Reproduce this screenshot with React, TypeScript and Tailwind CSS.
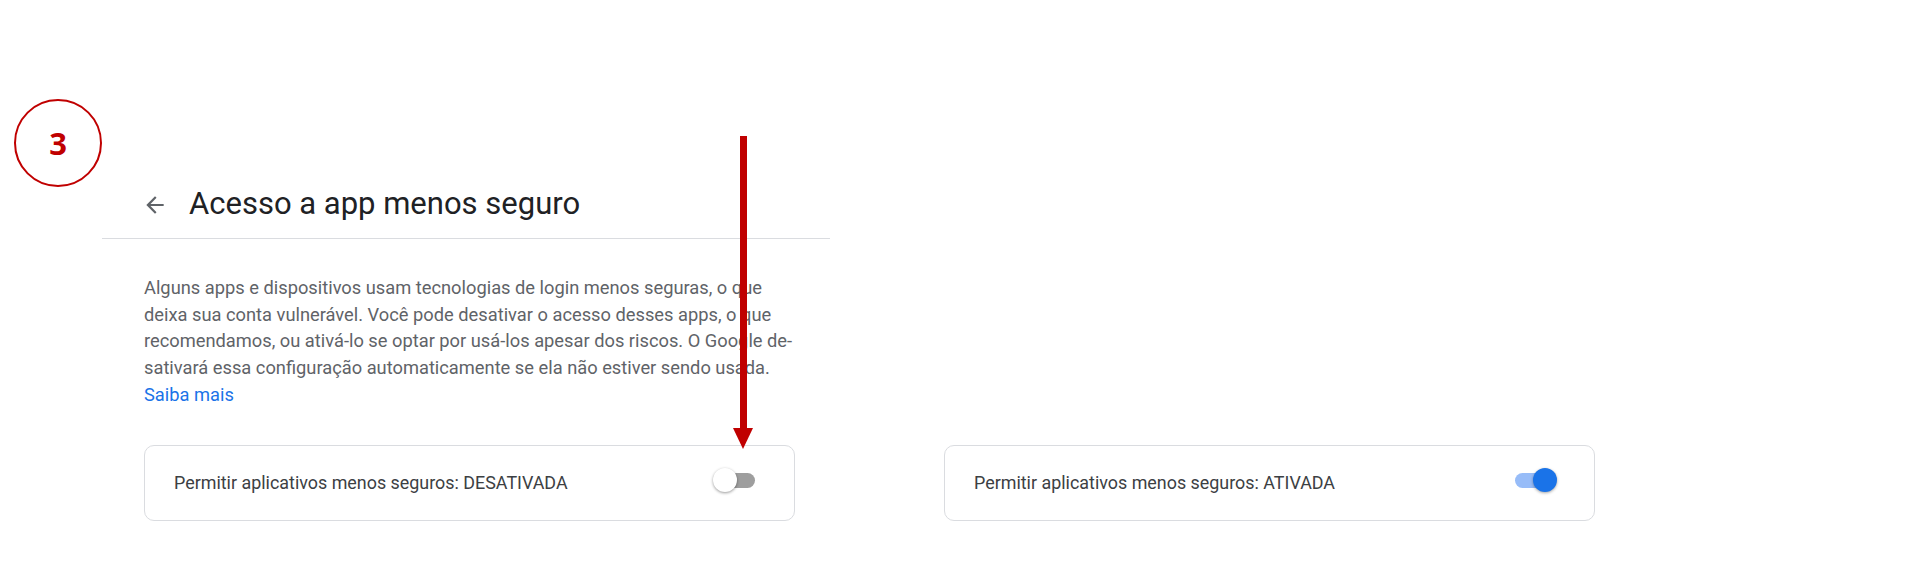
import { ReactNode } from 'react'

function Toggle({ on }: { on: boolean }) {
  return (
    <div className="relative w-[44px] h-[24px] shrink-0 mb-[6px]">
      <div
        className={
          on
            ? 'absolute left-[2px] right-[2px] top-[4.5px] h-[15px] rounded-full bg-[#97bcf8]'
            : 'absolute left-[2px] right-[2px] top-[4.5px] h-[15px] rounded-full bg-[#9e9e9e]'
        }
      />
      <div
        className={
          on
            ? 'absolute right-0 top-0 w-[24px] h-[24px] rounded-full bg-[#1a73e8] shadow-[0_1px_3px_rgba(0,0,0,0.35)]'
            : 'absolute left-0 top-0 w-[24px] h-[24px] rounded-full bg-white shadow-[0_1px_3px_rgba(0,0,0,0.4)]'
        }
      />
    </div>
  )
}

function SettingCard({ children, on }: { children: ReactNode; on: boolean }) {
  return (
    <div className="w-[651px] h-[76px] flex items-center justify-between pl-[29px] pr-[37px] rounded-[10px] border border-[#dadce0]">
      <span className="text-[17.9px] text-[#3c4043]">{children}</span>
      <Toggle on={on} />
    </div>
  )
}

export default function App() {
  return (
    <div className="relative h-[566px] w-full bg-white overflow-hidden font-['Roboto','Liberation_Sans',sans-serif]">
      {/* step marker */}
      <div className="absolute left-[14px] top-[99px] w-[88px] h-[88px] rounded-full border-2 border-[#c00000] flex items-center justify-center">
        <span className="text-[31px] font-bold text-[#c00000] leading-none font-['Open_Sans',sans-serif]">3</span>
      </div>

      {/* pointer arrow */}
      <svg className="absolute left-[733px] top-[136px]" width="20" height="313" viewBox="0 0 20 313">
        <rect x="7" y="0" width="7" height="293" fill="#c00000" />
        <polygon points="0,292 20,292 10,313" fill="#c00000" />
      </svg>

      <div className="pl-[102px] pt-[172px]">
        <div className="w-[728px] h-[67px] border-b border-[#dadce0] flex items-center pl-[40px] gap-[21px] pb-[1px]">
          <svg width="26" height="26" viewBox="0 0 24 24" fill="#5f6368">
            <path d="M20 11H7.83l5.59-5.59L12 4l-8 8 8 8 1.41-1.41L7.83 13H20v-2z" />
          </svg>
          <h1 className="text-[31px] text-[#202124] font-normal">Acesso a app menos seguro</h1>
        </div>

        <div className="pl-[42px]">
          <p className="mt-[36px] text-[18.3px] leading-[26.67px] text-[#5f6368]">
            Alguns apps e dispositivos usam tecnologias de login menos seguras, o que
            <br />
            deixa sua conta vulnerável. Você pode desativar o acesso desses apps, o que
            <br />
            recomendamos, ou ativá-lo se optar por usá-los apesar dos riscos. O Google de-
            <br />
            sativará essa configuração automaticamente se ela não estiver sendo usada.
            <br />
            <a className="text-[#1a73e8]">Saiba mais</a>
          </p>

          <div className="mt-[37px] flex gap-[149px]">
            <SettingCard on={false}>Permitir aplicativos menos seguros: DESATIVADA</SettingCard>
            <SettingCard on={true}>Permitir aplicativos menos seguros: ATIVADA</SettingCard>
          </div>
        </div>
      </div>
    </div>
  )
}
